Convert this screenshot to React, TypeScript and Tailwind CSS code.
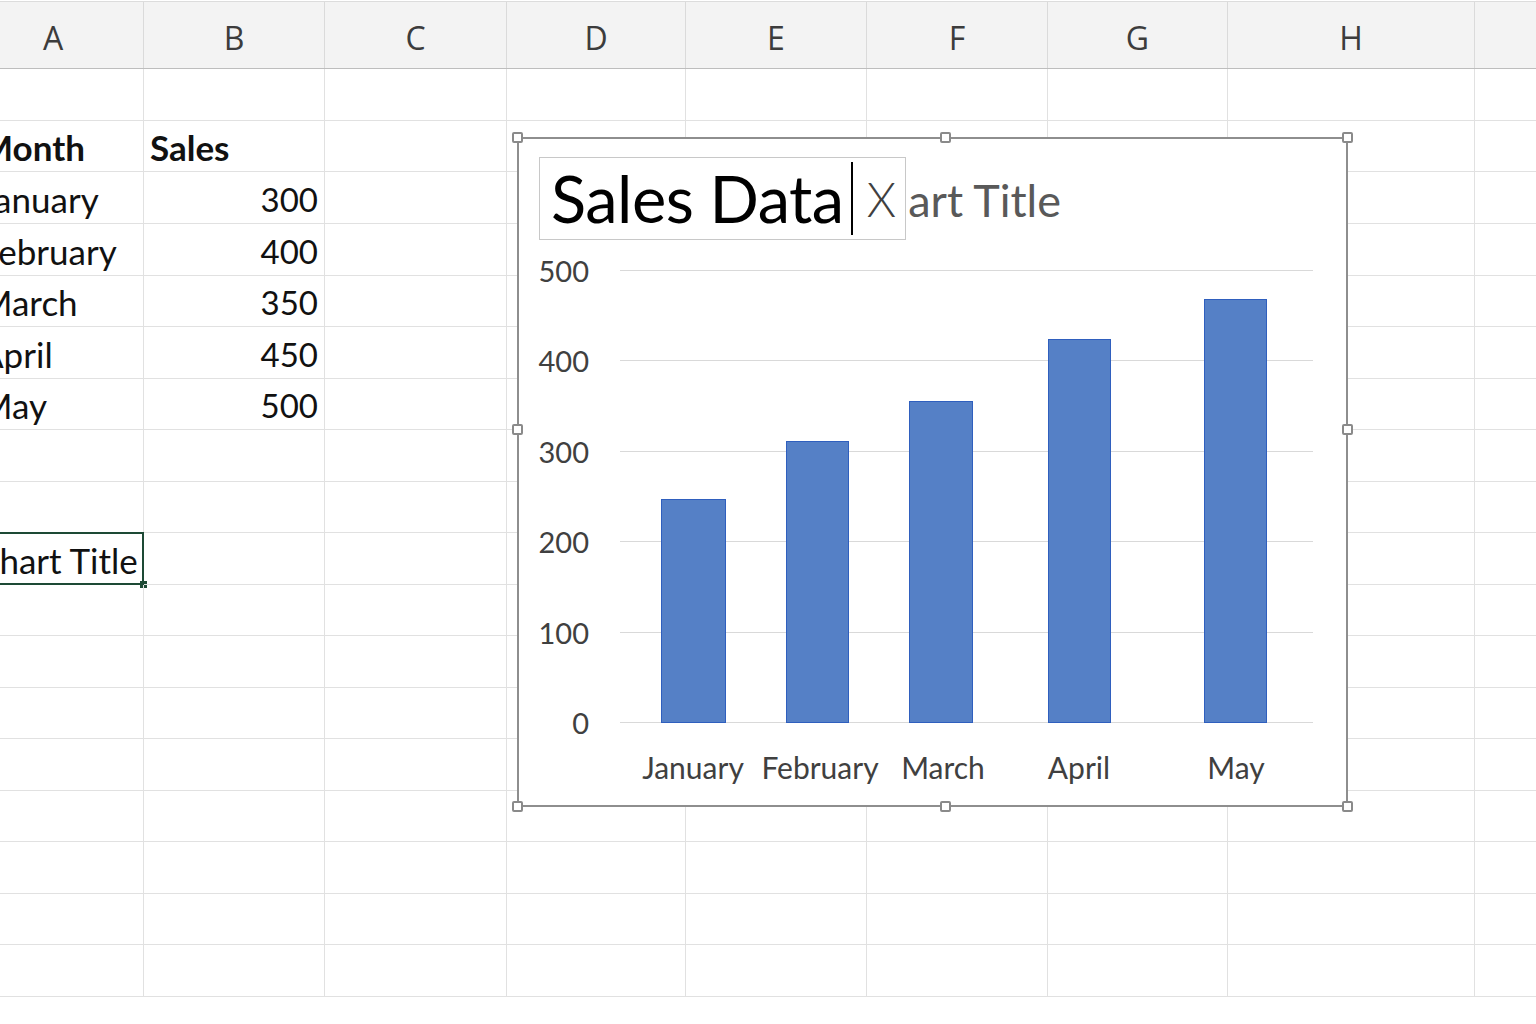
import * as React from "react";

type Cell = { a?: string; b?: string; bold?: boolean; selected?: boolean };

const COLS = [
  { label: "A", w: "w-[181px]" },
  { label: "B", w: "w-[181px]" },
  { label: "C", w: "w-[182px]" },
  { label: "D", w: "w-[179px]" },
  { label: "E", w: "w-[181px]" },
  { label: "F", w: "w-[181px]" },
  { label: "G", w: "w-[180px]" },
  { label: "H", w: "w-[247px]" },
  { label: "", w: "w-[200px]" },
];

const ROW_H = [
  "h-[52px]", "h-[51px]", "h-[52px]", "h-[52px]", "h-[51px]", "h-[52px]",
  "h-[51px]", "h-[52px]", "h-[51px]", "h-[52px]", "h-[51px]", "h-[52px]",
  "h-[51px]", "h-[52px]", "h-[51px]", "h-[52px]", "h-[51px]", "h-[52px]",
];

const ROWS: Cell[] = [
  {},
  { a: "Month", b: "Sales", bold: true },
  { a: "January", b: "300" },
  { a: "February", b: "400" },
  { a: "March", b: "350" },
  { a: "April", b: "450" },
  { a: "May", b: "500" },
  {},
  {},
  { a: "Chart Title", selected: true },
];

const BARS = [
  { label: "January", x: 142, w: 64, top: 250, cx: 174 },
  { label: "February", x: 267, w: 62, top: 192, cx: 301 },
  { label: "March", x: 390, w: 63, top: 152, cx: 424 },
  { label: "April", x: 529, w: 62, top: 90, cx: 560 },
  { label: "May", x: 685, w: 62, top: 50, cx: 717 },
];

const TICKS = [500, 400, 300, 200, 100, 0];

function Handle({ pos }: { pos: string }) {
  return (
    <div
      className={`absolute ${pos} w-[11px] h-[11px] bg-white border-2 border-[#8a8a8a] rounded-[2px] z-20`}
    />
  );
}

function Chart() {
  return (
    <div className="absolute left-[517px] top-[137px] w-[831px] h-[670px] border-2 border-[#8e8e8e] bg-white">
      {/* resize handles */}
      <Handle pos="-left-[7px] -top-[7px]" />
      <Handle pos="left-[421px] -top-[7px]" />
      <Handle pos="-right-[7px] -top-[7px]" />
      <Handle pos="-left-[7px] top-[285px]" />
      <Handle pos="-right-[7px] top-[285px]" />
      <Handle pos="-left-[7px] -bottom-[7px]" />
      <Handle pos="left-[421px] -bottom-[7px]" />
      <Handle pos="-right-[7px] -bottom-[7px]" />

      {/* title, being edited */}
      <div className="relative h-[110px]">
        <span className="absolute left-[334px] top-[39px] font-['Lato',sans-serif] text-[45px] leading-none text-[#595959]">
          Chart Title
        </span>
        <div className="absolute left-[20px] top-[18px] w-[367px] h-[83px] bg-white border border-[#c8c8c8] flex items-center pl-[11px]">
          <span className="font-['Lato',sans-serif] text-[65px] leading-none text-black tracking-[-0.5px]">
            Sales Data
          </span>
          <span className="ml-[7px] w-[2px] h-[73px] bg-black" />
          <span className="ml-[14px] mt-[2px] font-['Lato',sans-serif] font-light text-[47px] leading-none text-[#404040]">
            X
          </span>
        </div>
      </div>

      {/* plot */}
      <svg width="827" height="556" viewBox="0 0 827 556" className="block">
        {TICKS.map((t, i) => {
          const y = Math.round(21 + i * 90.4) + 0.5;
          return (
            <g key={t}>
              <line x1={101} x2={794} y1={y} y2={y} stroke="#d9d9d9" strokeWidth={1} />
              <text
                x={70}
                y={y}
                textAnchor="end"
                dominantBaseline="central"
                fontFamily="Lato, sans-serif"
                fontSize={29}
                fill="#404040"
              >
                {t}
              </text>
            </g>
          );
        })}
        {BARS.map((b) => (
          <g key={b.label}>
            <rect
              x={b.x + 0.5}
              y={b.top + 0.5}
              width={b.w}
              height={473 - b.top}
              fill="#5580c6"
              stroke="#2f5fbe"
              strokeWidth={1}
            />
            <text
              x={b.cx}
              y={518}
              textAnchor="middle"
              dominantBaseline="central"
              fontFamily="Lato, sans-serif"
              fontSize={30}
              fill="#404040"
            >
              {b.label}
            </text>
          </g>
        ))}
      </svg>
    </div>
  );
}

export default function App() {
  return (
    <div className="relative w-[1536px] h-[1024px] overflow-hidden bg-white">
      <div className="ml-[-37px] w-max">
        {/* column headers */}
        <div className="flex h-[68px] bg-[#f3f3f3] border-t border-[#dcdcdc] border-b border-b-[#bdbdbd] mt-[1px]">
          {COLS.map((c, i) => (
            <div
              key={i}
              className={`${c.w} flex items-center justify-center pt-[6px] border-r border-[#dadada] font-['Open_Sans',sans-serif] text-[32px] text-[#3c3c3c]`}
            >
              {c.label}
            </div>
          ))}
        </div>

        {/* rows */}
        {ROW_H.map((h, r) => {
          const row = ROWS[r] ?? {};
          const numeric = (i: number) => i === 1 && !row.bold;
          return (
            <div key={r} className={`flex ${h}`}>
              {COLS.map((c, i) => (
                <div
                  key={i}
                  className={`${c.w} relative flex items-end pb-[2px] border-r border-b border-[#e1e1e1] font-['Lato',sans-serif] leading-[44px] text-[#111] whitespace-nowrap ${
                    row.bold ? "font-bold" : ""
                  } ${
                    numeric(i)
                      ? "justify-end pr-[6px] text-[33px]"
                      : i === 0
                        ? row.selected
                          ? "pl-[13px] text-[35px]"
                          : "pl-[17px] text-[35px]"
                        : "pl-[6px] text-[35px]"
                  }`}
                >
                  {i === 0 && row.a}
                  {i === 1 && row.b}
                  {i === 0 && row.selected && (
                    <>
                      <div className="absolute -left-px -top-px -right-px -bottom-px border-2 border-[#1d4a35]" />
                      <div className="absolute -right-[4px] -bottom-[4px] w-[7px] h-[7px] bg-[#1d4a35]" />
                    </>
                  )}
                </div>
              ))}
            </div>
          );
        })}
      </div>

      <Chart />
    </div>
  );
}
